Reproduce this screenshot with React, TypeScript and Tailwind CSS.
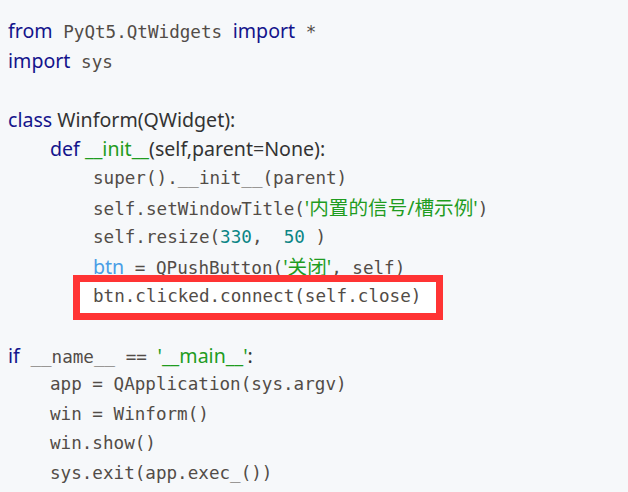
type Tok = [string, string];

const prop = "font-['Noto_Sans','Noto_Sans_CJK_SC',sans-serif] text-[19.6px]";
const mono = "font-['DejaVu_Sans_Mono','Noto_Sans_CJK_SC',monospace] text-[17.6px]";

const styles: Record<string, string> = {
  kw: `${prop} text-[#14148c]`,
  p: `${prop} text-[#333333]`,
  s: `${prop} text-[#1f9c1f]`,
  v: `${prop} text-[#4a9ee6]`,
  m: `${mono} text-[#524c47]`,
  n: `${mono} text-[#0b8585]`,
};

const lines: { indent: number; toks: Tok[]; boxed?: boolean }[] = [
  { indent: 0, toks: [['kw', 'from'], ['m', ' PyQt5.QtWidgets '], ['kw', 'import'], ['m', ' *']] },
  { indent: 0, toks: [['kw', 'import'], ['m', ' sys']] },
  { indent: 0, toks: [] },
  { indent: 0, toks: [['kw', 'class'], ['p', ' Winform(QWidget):']] },
  { indent: 1, toks: [['kw', 'def'], ['p', ' '], ['s', '__init__'], ['p', '(self,parent=None):']] },
  { indent: 2, toks: [['m', 'super().__init__(parent)']] },
  { indent: 2, toks: [['m', 'self.setWindowTitle('], ['s', "'内置的信号/槽示例'"], ['m', ')']] },
  { indent: 2, toks: [['m', 'self.resize('], ['n', '330'], ['m', ',  '], ['n', '50'], ['m', ' )']] },
  { indent: 2, toks: [['v', 'btn'], ['m', ' = QPushButton('], ['s', "'关闭'"], ['m', ', self)']] },
  { indent: 2, toks: [['m', 'btn.clicked.connect(self.close)']], boxed: true },
  { indent: 0, toks: [] },
  { indent: 0, toks: [['kw', 'if'], ['m', ' __name__ == '], ['s', "'__main__'"], ['p', ':']] },
  { indent: 1, toks: [['m', 'app = QApplication(sys.argv)']] },
  { indent: 1, toks: [['m', 'win = Winform()']] },
  { indent: 1, toks: [['m', 'win.show()']] },
  { indent: 1, toks: [['m', 'sys.exit(app.exec_())']] },
];

const indents = ['pl-0', 'pl-[42px]', 'pl-[85px]'];

export default function App() {
  return (
    <div className="w-[628px] h-[492px] bg-[#f6f8fa] overflow-hidden pt-[16px] pl-[8px]">
      {lines.map((line, i) => (
        <div key={i} className={`h-[29.5px] leading-[29.5px] whitespace-pre ${indents[line.indent]}`}>
          <span className="relative inline-block">
            {line.boxed && (
              <span className="absolute -left-[20px] -top-[7px] w-[370px] h-[45px] border-[7px] border-[#ff3434] bg-white" />
            )}
            <span className="relative">
              {line.toks.map(([t, text], j) => (
                <span key={j} className={styles[t]}>
                  {text}
                </span>
              ))}
            </span>
          </span>
        </div>
      ))}
    </div>
  );
}
